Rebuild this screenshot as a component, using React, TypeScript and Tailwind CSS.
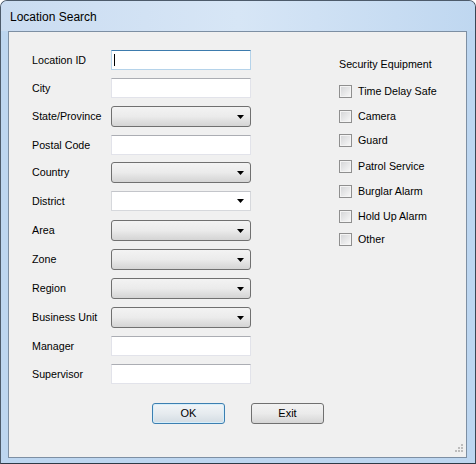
import React from 'react';

type Kind = 'focus' | 'text' | 'combo' | 'drop';

interface FieldRow {
  label: string;
  kind: Kind;
  h: string;
}

// alturas tomadas de la captura, fila por fila
const fields: FieldRow[] = [
  { label: 'Location ID', kind: 'focus', h: 'h-[28px]' },
  { label: 'City', kind: 'text', h: 'h-[28px]' },
  { label: 'State/Province', kind: 'combo', h: 'h-[29px]' },
  { label: 'Postal Code', kind: 'text', h: 'h-[27px]' },
  { label: 'Country', kind: 'combo', h: 'h-[29px]' },
  { label: 'District', kind: 'drop', h: 'h-[29px]' },
  { label: 'Area', kind: 'combo', h: 'h-[29px]' },
  { label: 'Zone', kind: 'combo', h: 'h-[29px]' },
  { label: 'Region', kind: 'combo', h: 'h-[29px]' },
  { label: 'Business Unit', kind: 'combo', h: 'h-[29px]' },
  { label: 'Manager', kind: 'text', h: 'h-[28px]' },
  { label: 'Supervisor', kind: 'text', h: 'h-[20px]' },
];

const equipment = [
  { label: 'Time Delay Safe', mt: 'mt-[13px]' },
  { label: 'Camera', mt: 'mt-[11px]' },
  { label: 'Guard', mt: 'mt-[10px]' },
  { label: 'Patrol Service', mt: 'mt-[12px]' },
  { label: 'Burglar Alarm', mt: 'mt-[11px]' },
  { label: 'Hold Up Alarm', mt: 'mt-[11px]' },
  { label: 'Other', mt: 'mt-[9px]' },
];

const Arrow = () => (
  <svg width="7" height="4" viewBox="0 0 7 4" className="absolute right-[6px] top-1/2 -translate-y-1/2">
    <path d="M0 0h7L3.5 4z" fill="#000" />
  </svg>
);

const Control: React.FC<{ kind: Kind }> = ({ kind }) => {
  if (kind === 'combo') {
    return (
      <div className="relative w-[141px] h-[21px] rounded-[3px] border border-[#707070] bg-gradient-to-b from-[#f3f3f3] via-[#ebebeb] to-[#d4d4d4]">
        <Arrow />
      </div>
    );
  }
  if (kind === 'drop') {
    return (
      <div className="relative w-[141px] h-[20px] border border-[#d6d8dc] border-t-[#c3c5ca] bg-white">
        <Arrow />
      </div>
    );
  }
  if (kind === 'focus') {
    return (
      <div className="relative w-[141px] h-[20px] border border-[#b5d3ea] border-t-[#3d7bad] bg-white">
        <div className="absolute left-[2px] top-[3px] w-px h-[12px] bg-black" />
      </div>
    );
  }
  return <div className="w-[141px] h-[20px] border border-[#e2e3ea] border-t-[#abadb3] bg-white" />;
};

const CheckBox = () => (
  <div className="w-[13px] h-[13px] border border-[#8f8f8f] bg-[#f4f4f4] p-px">
    <div className="w-full h-full bg-gradient-to-br from-[#d6d7d9] to-[#f6f6f6]" />
  </div>
);

export default function App() {
  return (
    <div
      className="w-[476px] h-[464px] flex flex-col border border-[#4d5b6b] border-r-[#3a4654] border-b-[#2f3a46] rounded-t-[7px] bg-[#bdd6f0] text-black"
      style={{ fontFamily: '"Liberation Sans", Arial, sans-serif' }}
    >
      {/* barra de título */}
      <div className="h-[30px] flex items-center pl-[9px] pt-px rounded-t-[6px] bg-gradient-to-r from-[#cadcf1] via-[#d7e6f6] to-[#bfd7f0]">
        <span className="text-[12px]">Location Search</span>
      </div>

      {/* área cliente */}
      <div className="relative ml-[7px] mr-[8px] h-[427px] border border-[#7d8fa3] bg-[#f0f0f0] text-[10.7px]">
        <div className="flex">
          <div className="w-[242px] pl-[23px] pt-[18px] flex flex-col">
            {fields.map((f) => (
              <div key={f.label} className={`${f.h} flex items-start`}>
                <div className={`w-[79px] flex items-center ${f.kind === 'combo' ? 'h-[21px]' : 'h-[20px]'}`}>
                  {f.label}
                </div>
                <Control kind={f.kind} />
              </div>
            ))}
          </div>

          <div className="ml-[88px] pt-[25px] flex flex-col">
            <div className="h-[14px] flex items-center">Security Equipment</div>
            {equipment.map((e) => (
              <div key={e.label} className={`${e.mt} h-[14px] flex items-center gap-[6px]`}>
                <CheckBox />
                <span>{e.label}</span>
              </div>
            ))}
          </div>
        </div>

        <div className="flex pl-[143px] mt-[19px] gap-[26px]">
          <button className="w-[73px] h-[21px] rounded-[3px] border border-[#3c7fb1] bg-gradient-to-b from-[#f1f5f8] via-[#e6ebef] to-[#d3dce3] text-[11px] shadow-[inset_0_0_0_1px_#d6eefa]">
            OK
          </button>
          <button className="w-[73px] h-[21px] rounded-[3px] border border-[#707070] bg-gradient-to-b from-[#f2f2f2] via-[#ebebeb] to-[#d5d5d5] text-[11px]">
            Exit
          </button>
        </div>

        {/* agarre de redimensionado */}
        <svg width="10" height="10" viewBox="0 0 10 10" className="absolute right-[2px] bottom-[4px]">
          <rect x="7" y="1" width="2" height="2" fill="#bdbdbd" />
          <rect x="4" y="4" width="2" height="2" fill="#bdbdbd" />
          <rect x="7" y="4" width="2" height="2" fill="#bdbdbd" />
          <rect x="1" y="7" width="2" height="2" fill="#bdbdbd" />
          <rect x="4" y="7" width="2" height="2" fill="#bdbdbd" />
          <rect x="7" y="7" width="2" height="2" fill="#bdbdbd" />
        </svg>
      </div>
    </div>
  );
}
